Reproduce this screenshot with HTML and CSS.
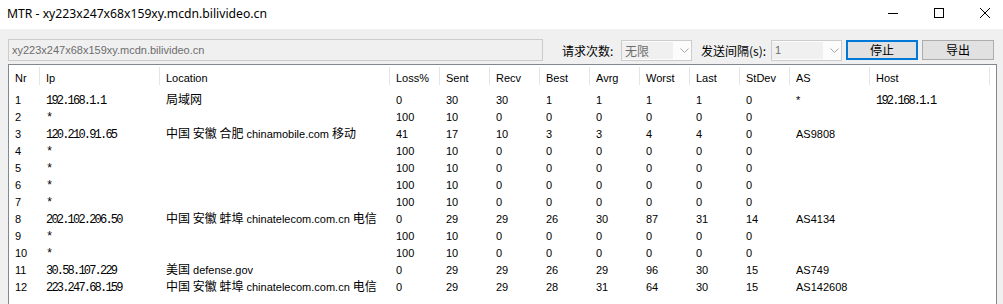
FILE: index.html
```html
<!DOCTYPE html>
<html lang="zh-CN">
<head>
    <meta charset="UTF-8">
    <title>MTR - xy223x247x68x159xy.mcdn.bilivideo.cn</title>
    <link rel="stylesheet" href="styles.css">
</head>
<body>
    <header class="titlebar">
        <div class="title">MTR - xy223x247x68x159xy.mcdn.bilivideo.cn</div>
        <div class="controls">
            <span class="ctl"><svg width="10" height="10" viewBox="0 0 10 10"><path d="M0 5.5h10" stroke="#000" stroke-width="1"/></svg></span>
            <span class="ctl"><svg width="10" height="10" viewBox="0 0 10 10"><rect x="0.5" y="0.5" width="9" height="9" fill="none" stroke="#000"/></svg></span>
            <span class="ctl"><svg width="10" height="10" viewBox="0 0 10 10"><path d="M0 0L10 10M10 0L0 10" stroke="#000" stroke-width="1"/></svg></span>
        </div>
    </header>

    <div class="toolbar">
        <input class="target" type="text" value="xy223x247x68x159xy.mcdn.bilivideo.cn" disabled>
        <label class="field-label count-label">请求次数:</label>
        <div class="combo">
            <span class="combo-value zh">无限</span>
            <svg class="chevron" width="9" height="5" viewBox="0 0 9 5"><path d="M0.5 0.5L4.5 4.5L8.5 0.5" fill="none" stroke="#a6a6a6"/></svg>
        </div>
        <label class="field-label interval-label">发送间隔(s):</label>
        <div class="combo">
            <span class="combo-value">1</span>
            <svg class="chevron" width="9" height="5" viewBox="0 0 9 5"><path d="M0.5 0.5L4.5 4.5L8.5 0.5" fill="none" stroke="#a6a6a6"/></svg>
        </div>
        <button class="btn btn-default">停止</button>
        <button class="btn">导出</button>
    </div>

    <div class="list">
        <table>
            <colgroup>
                <col class="c-nr"><col class="c-ip"><col class="c-loc">
                <col class="c-num"><col class="c-num"><col class="c-num"><col class="c-num">
                <col class="c-num"><col class="c-num"><col class="c-num"><col class="c-num">
                <col class="c-as"><col class="c-host">
            </colgroup>
            <thead>
                <tr>
                    <th><div>Nr</div></th>
                    <th><div>Ip</div></th>
                    <th><div>Location</div></th>
                    <th><div>Loss%</div></th>
                    <th><div>Sent</div></th>
                    <th><div>Recv</div></th>
                    <th><div>Best</div></th>
                    <th><div>Avrg</div></th>
                    <th><div>Worst</div></th>
                    <th><div>Last</div></th>
                    <th><div>StDev</div></th>
                    <th><div>AS</div></th>
                    <th><div>Host</div></th>
                </tr>
            </thead>
            <tbody>
                <tr><td>1</td><td><span class="ip">192.168.1.1</span></td><td><span class="zh">局域网</span></td><td>0</td><td>30</td><td>30</td><td>1</td><td>1</td><td>1</td><td>1</td><td>0</td><td>*</td><td><span class="ip">192.168.1.1</span></td></tr>
                <tr><td>2</td><td><span class="ip">*</span></td><td></td><td>100</td><td>10</td><td>0</td><td>0</td><td>0</td><td>0</td><td>0</td><td>0</td><td></td><td></td></tr>
                <tr><td>3</td><td><span class="ip">120.210.91.65</span></td><td><span class="zh">中国 安徽 合肥</span> chinamobile.com <span class="zh">移动</span></td><td>41</td><td>17</td><td>10</td><td>3</td><td>3</td><td>4</td><td>4</td><td>0</td><td>AS9808</td><td></td></tr>
                <tr><td>4</td><td><span class="ip">*</span></td><td></td><td>100</td><td>10</td><td>0</td><td>0</td><td>0</td><td>0</td><td>0</td><td>0</td><td></td><td></td></tr>
                <tr><td>5</td><td><span class="ip">*</span></td><td></td><td>100</td><td>10</td><td>0</td><td>0</td><td>0</td><td>0</td><td>0</td><td>0</td><td></td><td></td></tr>
                <tr><td>6</td><td><span class="ip">*</span></td><td></td><td>100</td><td>10</td><td>0</td><td>0</td><td>0</td><td>0</td><td>0</td><td>0</td><td></td><td></td></tr>
                <tr><td>7</td><td><span class="ip">*</span></td><td></td><td>100</td><td>10</td><td>0</td><td>0</td><td>0</td><td>0</td><td>0</td><td>0</td><td></td><td></td></tr>
                <tr><td>8</td><td><span class="ip">202.102.206.50</span></td><td><span class="zh">中国 安徽 蚌埠</span> chinatelecom.com.cn <span class="zh">电信</span></td><td>0</td><td>29</td><td>29</td><td>26</td><td>30</td><td>87</td><td>31</td><td>14</td><td>AS4134</td><td></td></tr>
                <tr><td>9</td><td><span class="ip">*</span></td><td></td><td>100</td><td>10</td><td>0</td><td>0</td><td>0</td><td>0</td><td>0</td><td>0</td><td></td><td></td></tr>
                <tr><td>10</td><td><span class="ip">*</span></td><td></td><td>100</td><td>10</td><td>0</td><td>0</td><td>0</td><td>0</td><td>0</td><td>0</td><td></td><td></td></tr>
                <tr><td>11</td><td><span class="ip">30.58.107.229</span></td><td><span class="zh">美国</span> defense.gov</td><td>0</td><td>29</td><td>29</td><td>26</td><td>29</td><td>96</td><td>30</td><td>15</td><td>AS749</td><td></td></tr>
                <tr><td>12</td><td><span class="ip">223.247.68.159</span></td><td><span class="zh">中国 安徽 蚌埠</span> chinatelecom.com.cn <span class="zh">电信</span></td><td>0</td><td>29</td><td>29</td><td>28</td><td>31</td><td>64</td><td>30</td><td>15</td><td>AS142608</td><td></td></tr>
            </tbody>
        </table>
    </div>
</body>
</html>
```

FILE: styles.css
```css
:root {
    --window-bg: #f0f0f0;
    --field-border: #cccccc;
    --disabled-text: #6d6d6d;
    --list-border: #828790;
    --grid-line: #e5e5e5;
    --button-bg: #e1e1e1;
    --button-border: #adadad;
    --accent: #0078d7;
}

* {
    box-sizing: border-box;
}

body {
    margin: 0;
    width: 1003px;
    height: 304px;
    overflow: hidden;
    background-color: var(--window-bg);
    font-family: "Liberation Sans", "Noto Sans CJK SC", sans-serif;
    font-size: 11px;
    color: #000;
}

.zh {
    font-family: "Noto Sans CJK SC", sans-serif;
    font-size: 12px;
    line-height: 14px;
}

/* title bar */
.titlebar {
    height: 29px;
    background-color: #fff;
    display: flex;
    align-items: center;
}

.title {
    flex: 1;
    padding: 0 0 2px 7px;
    font-family: "Noto Sans", sans-serif;
    font-size: 12.2px;
}

.controls {
    display: flex;
    margin-right: -5px;
}

.ctl {
    width: 46px;
    height: 29px;
    display: flex;
    align-items: center;
    justify-content: center;
    padding-bottom: 3px;
}

/* toolbar */
.toolbar {
    height: 33px;
    padding: 9px 9px 0 8px;
    display: flex;
    align-items: center;
}

.target {
    width: 535px;
    height: 22px;
    margin: 0;
    padding: 0 0 0 3px;
    border: 1px solid var(--field-border);
    background-color: var(--window-bg);
    color: var(--disabled-text);
    font-family: "Liberation Sans", sans-serif;
    font-size: 11px;
}

.field-label {
    font-family: "Noto Sans CJK SC", sans-serif;
    font-size: 12px;
    white-space: nowrap;
}

.count-label {
    margin-left: 19px;
    width: 59px;
}

.interval-label {
    margin-left: 9px;
    width: 70px;
}

.combo {
    width: 71px;
    height: 21px;
    border: 1px solid var(--field-border);
    background-color: #fcfcfc;
    display: flex;
    align-items: center;
}

.combo-value {
    width: 51px;
    height: 17px;
    padding-left: 3px;
    background-color: #f0f0f0;
    color: var(--disabled-text);
    line-height: 17px;
}

.chevron {
    margin-left: 7px;
}

.btn {
    width: 72px;
    height: 20px;
    margin-left: 4px;
    padding: 0 0 1px;
    border: 1px solid var(--button-border);
    background-color: var(--button-bg);
    font-family: "Noto Sans CJK SC", sans-serif;
    font-size: 12px;
    line-height: 16px;
    color: #000;
}

.btn-default {
    border: 2px solid var(--accent);
}

/* hop list, runs on past the bottom of the window */
.list {
    width: 989px;
    height: 240px;
    margin: 2px 0 0 8px;
    border: 1px solid var(--list-border);
    border-bottom: none;
    background-color: #fff;
}

table {
    border-collapse: collapse;
    table-layout: fixed;
    width: 981px;
}

.c-nr { width: 31px; }
.c-ip { width: 120px; }
.c-loc { width: 230px; }
.c-num { width: 50px; }
.c-as { width: 80px; }
.c-host { width: 120px; }

th {
    padding: 0;
    font-weight: normal;
    text-align: left;
}

th div {
    height: 18px;
    margin: 2px 0 7px;
    padding: 5px 0 0 6px;
    line-height: 13px;
    border-right: 1px solid var(--grid-line);
    white-space: nowrap;
}

td {
    height: 17px;
    padding: 0 0 0 6px;
    line-height: 17px;
    white-space: nowrap;
}

.ip {
    font-family: "Liberation Mono", monospace;
    font-size: 12px;
    line-height: 12px;
    letter-spacing: -1.8px;
}
```
